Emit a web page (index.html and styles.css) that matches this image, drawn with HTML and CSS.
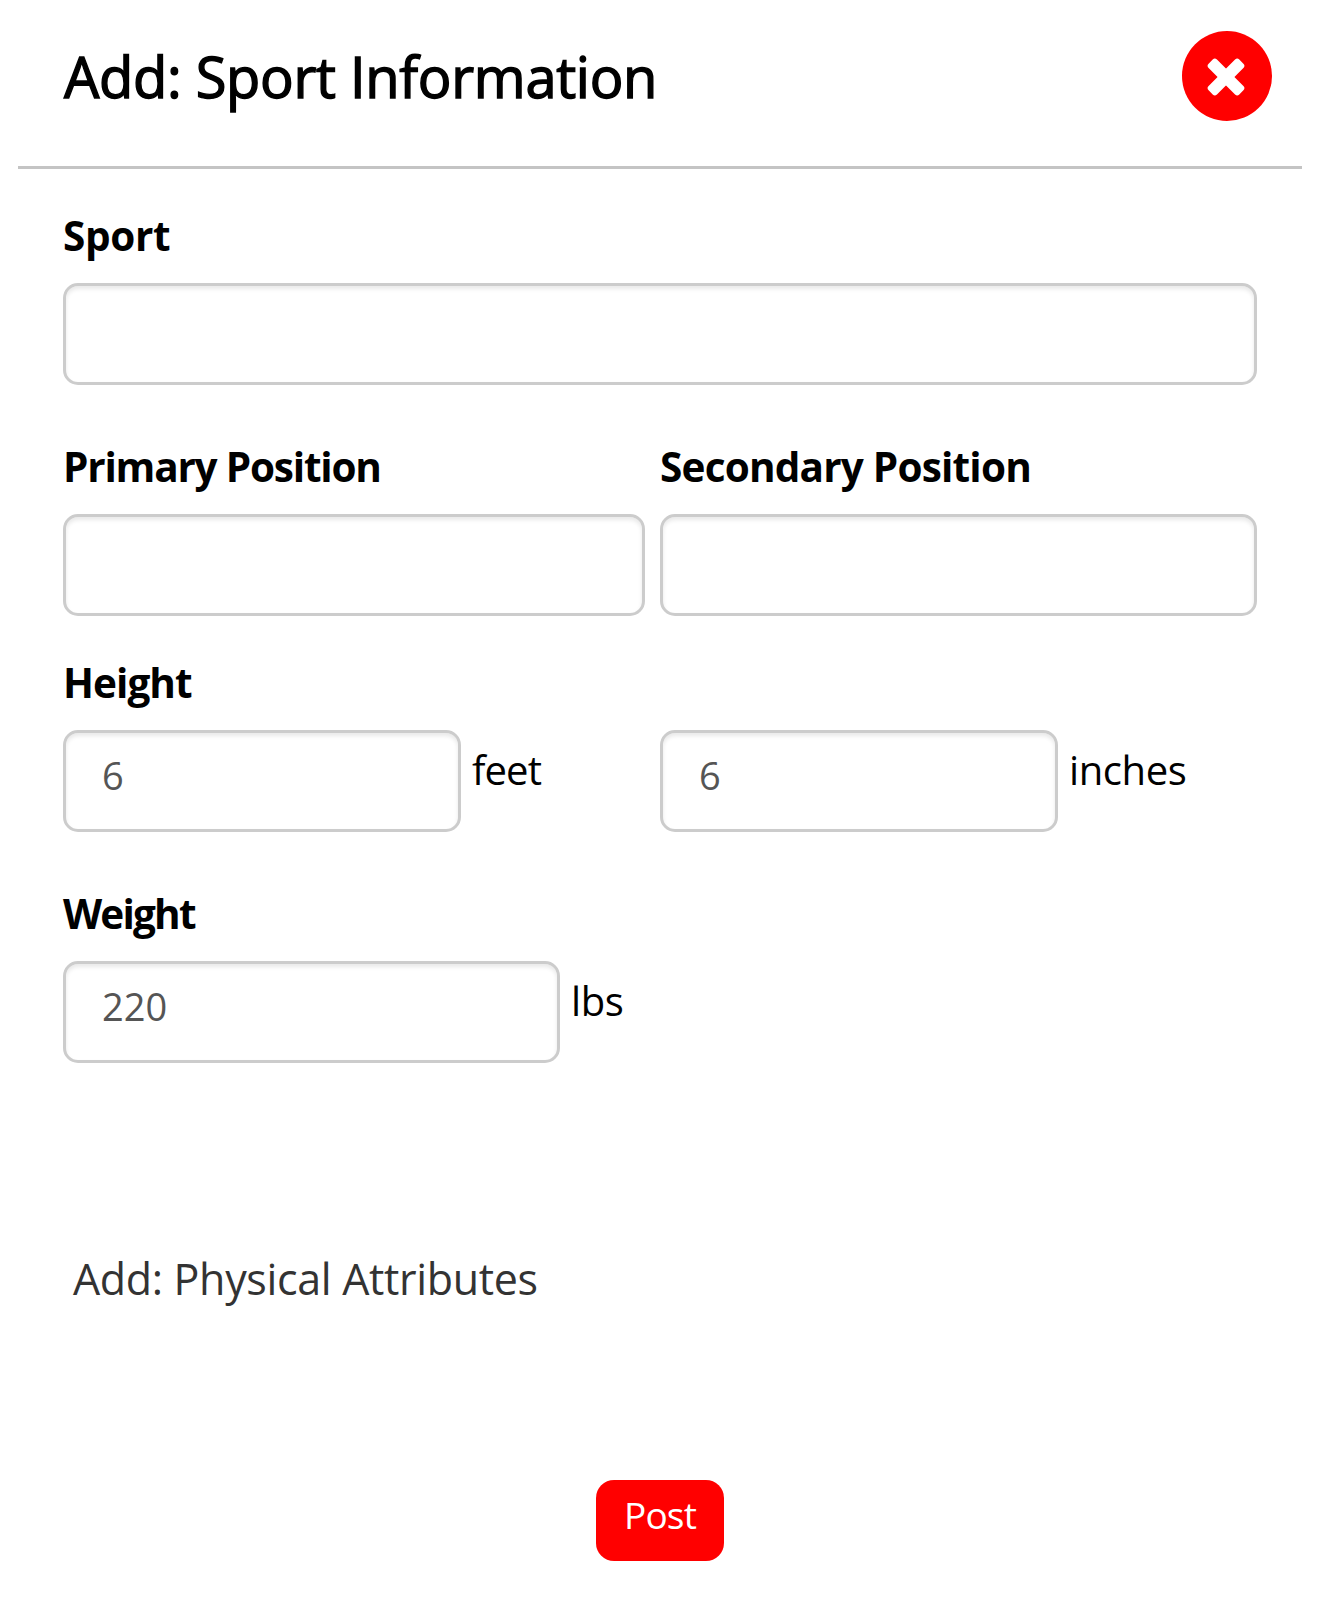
FILE: index.html
```html
<!DOCTYPE html>
<html lang="en">
<head>
<meta charset="utf-8">
<title>Add: Sport Information</title>
<link rel="stylesheet" href="styles.css">
</head>
<body>
<header class="header">
  <h1 class="title">Add: Sport Information</h1>
  <button class="close" type="button" aria-label="Close">
    <svg class="close-icon" viewBox="0 0 38 38" aria-hidden="true">
      <rect x="-2.7" y="13.1" width="43.4" height="11.8" rx="3" transform="rotate(45 19 19)"/>
      <rect x="-2.7" y="13.1" width="43.4" height="11.8" rx="3" transform="rotate(-45 19 19)"/>
    </svg>
  </button>
</header>
<form class="form">
  <div class="field">
    <label class="label label-sport" for="sport">Sport</label>
    <input class="input" id="sport" type="text">
  </div>
  <div class="row row-positions">
    <div class="field primary">
      <label class="label label-primary" for="primary">Primary Position</label>
      <input class="input" id="primary" type="text">
    </div>
    <div class="field secondary">
      <label class="label label-secondary" for="secondary">Secondary Position</label>
      <input class="input" id="secondary" type="text">
    </div>
  </div>
  <div class="field field-height">
    <label class="label label-height" for="feet">Height</label>
    <div class="row">
      <div class="measure half"><input class="input input-short" id="feet" type="text" value="6"><span class="unit unit-feet">feet</span></div>
      <div class="measure half"><input class="input input-short" type="text" value="6" aria-label="Inches"><span class="unit">inches</span></div>
    </div>
  </div>
  <div class="field field-weight">
    <label class="label label-weight" for="weight">Weight</label>
    <div class="measure"><input class="input input-weight" id="weight" type="text" value="220"><span class="unit">lbs</span></div>
  </div>
  <a class="physical">Add: Physical Attributes</a>
  <button class="post" type="button">Post</button>
</form>
</body>
</html>
```
FILE: styles.css
```css
* { box-sizing: border-box; }
body { margin: 0; background: #fff; color: #000; font-family: "Open Sans", "Noto Sans", sans-serif; }
.header { display: flex; justify-content: space-between; align-items: flex-start; height: 169px; margin: 0 18px; padding: 31px 30px 0 46px; border-bottom: 3px solid #c4c4c4; }
.title { margin: 15px 0 0; font-size: 56px; line-height: 60px; font-weight: 500; letter-spacing: -.3px; -webkit-text-stroke: 1.4px #000; white-space: nowrap; }
.close { display: flex; align-items: center; justify-content: center; width: 90px; height: 90px; padding: 1px 2px 0 0; border: 0; border-radius: 50%; background: #f00; }
.close-icon { width: 38px; height: 38px; overflow: visible; fill: #fff; }
.form { display: flex; flex-direction: column; align-items: stretch; padding: 42px 63px 0; }
.row { display: flex; }
.row-positions { gap: 15px; margin-top: 57px; }
.primary { width: 582px; }
.secondary { flex: 1; }
.field { display: flex; flex-direction: column; }
.field-height { margin-top: 42px; }
.field-weight { margin-top: 57px; }
.label { height: 50px; margin-bottom: 22px; font-size: 40.5px; line-height: 50px; font-weight: 700; white-space: nowrap; }
.label-sport { letter-spacing: -.35px; }
.label-primary { letter-spacing: -1.2px; }
.label-secondary { letter-spacing: -.8px; }
.label-height { letter-spacing: -.95px; }
.label-weight { letter-spacing: -1.8px; }
.input { width: 100%; height: 102px; padding: 0 36px 12px; border: 3px solid #ccc; border-radius: 15px; background: #fff; box-shadow: inset 0 3px 4px rgba(0, 0, 0, .09); color: #555; font: 38px "Open Sans", sans-serif; outline: 0; }
.measure { display: flex; }
.half { width: 597px; }
.input-short { width: 398px; }
.input-weight { width: 497px; }
.unit { margin: 15px 0 0 11px; font-size: 40px; line-height: 50px; letter-spacing: -.4px; }
.unit-feet { letter-spacing: -.9px; }
.physical { align-self: flex-start; margin: 191px 0 0 10px; color: #333; font-size: 43px; line-height: 50px; letter-spacing: -.34px; white-space: nowrap; }
.post { align-self: center; width: 128px; height: 81px; margin-top: 176px; padding: 0 0 13px; border: 0; border-radius: 18px; background: #f00; color: #fff; font: 37px "Open Sans", sans-serif; letter-spacing: -.8px; }
```
